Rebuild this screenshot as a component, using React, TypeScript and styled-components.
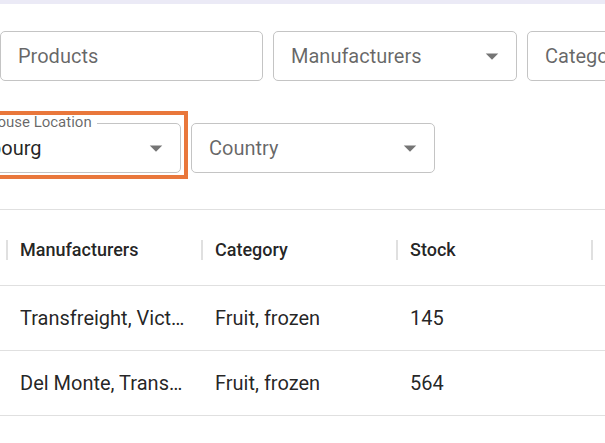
import styled, { createGlobalStyle } from 'styled-components';

const GlobalStyle = createGlobalStyle`
  html, body {
    margin: 0;
    padding: 0;
    background: #fff;
    overflow: hidden;
  }
  body {
    font-family: Roboto, 'Liberation Sans', sans-serif;
  }
`;

const Page = styled.div`
  width: 605px;
  height: 443px;
  overflow: hidden;
`;

const TopStrip = styled.div`
  height: 4px;
  background: #ebeaf6;
`;

const FilterRow = styled.div<{ $top: number; $offset?: number }>`
  display: flex;
  gap: 10px;
  margin-top: ${p => p.$top}px;
  margin-left: ${p => p.$offset ?? 0}px;
`;

const Field = styled.div<{ $width: number }>`
  position: relative;
  flex: 0 0 ${p => p.$width}px;
  box-sizing: border-box;
  height: 50px;
  display: flex;
  align-items: center;
  padding: 0 9px 0 17px;
  border: 1px solid #c4c4c4;
  border-radius: 5px;
  background: #fff;
`;

const FieldText = styled.span<{ $filled?: boolean }>`
  flex: 1;
  font-size: 20px;
  white-space: nowrap;
  overflow: hidden;
  color: ${p => (p.$filled ? 'rgba(0, 0, 0, 0.87)' : 'rgba(0, 0, 0, 0.6)')};
`;

const FloatingLabel = styled.span`
  position: absolute;
  top: -9px;
  left: 12px;
  padding: 0 5px;
  font-size: 15px;
  line-height: 15px;
  color: rgba(0, 0, 0, 0.6);
  background: #fff;
  white-space: nowrap;
`;

const Highlight = styled.span`
  position: absolute;
  top: -13px;
  right: -8px;
  bottom: -7px;
  left: -30px;
  border: 4px solid #e9773b;
  pointer-events: none;
`;

const Arrow = styled.svg`
  flex: 0 0 30px;
  width: 30px;
  height: 30px;
  fill: rgba(0, 0, 0, 0.54);
`;

const DropArrow = () => (
  <Arrow viewBox="0 0 24 24">
    <path d="M7 10l5 5 5-5z" />
  </Arrow>
);

const Grid = styled.div`
  margin-top: 36px;
  margin-left: -187px;
  width: 1200px;
  border-top: 1px solid #e0e0e0;
`;

const HeaderRow = styled.div`
  display: flex;
  box-sizing: border-box;
  height: 76px;
  padding-top: 4px;
  border-bottom: 1px solid #e0e0e0;
`;

const HeaderCell = styled.div`
  flex: 0 0 195px;
  box-sizing: border-box;
  display: flex;
  align-items: center;
  padding-left: 12px;
  font-size: 18px;
  font-weight: 500;
  color: rgba(0, 0, 0, 0.87);
`;

const HeaderLabel = styled.span`
  flex: 1;
  white-space: nowrap;
  overflow: hidden;
`;

const Separator = styled.span`
  flex: 0 0 2px;
  height: 20px;
  background: #e0e0e0;
`;

const Row = styled.div`
  display: flex;
  height: 65px;
  box-sizing: border-box;
  border-bottom: 1px solid #e0e0e0;
`;

const Cell = styled.div`
  flex: 0 0 195px;
  box-sizing: border-box;
  padding: 0 12px;
  line-height: 64px;
  font-size: 20px;
  color: rgba(0, 0, 0, 0.87);
  white-space: nowrap;
  overflow: hidden;
  text-overflow: ellipsis;
`;

const columns = ['Products', 'Manufacturers', 'Category', 'Stock', 'Price'];

const rows = [
  ['Frozen Raspberries', 'Transfreight, Victoria Foods', 'Fruit, frozen', '145', '4.20'],
  ['Frozen Mango Chunks', 'Del Monte, Transworld', 'Fruit, frozen', '564', '3.80'],
];

export default function App() {
  return (
    <Page>
      <GlobalStyle />
      <TopStrip />
      <FilterRow $top={27}>
        <Field $width={263}>
          <FieldText>Products</FieldText>
        </Field>
        <Field $width={244}>
          <FieldText>Manufacturers</FieldText>
          <DropArrow />
        </Field>
        <Field $width={244}>
          <FieldText>Category</FieldText>
          <DropArrow />
        </Field>
      </FilterRow>
      <FilterRow $top={42} $offset={-63}>
        <Field $width={244}>
          <FloatingLabel>Warehouse Location</FloatingLabel>
          <FieldText $filled>Marbourg</FieldText>
          <DropArrow />
          <Highlight />
        </Field>
        <Field $width={244}>
          <FieldText>Country</FieldText>
          <DropArrow />
        </Field>
      </FilterRow>
      <Grid>
        <HeaderRow>
          {columns.map(c => (
            <HeaderCell key={c}>
              <HeaderLabel>{c}</HeaderLabel>
              <Separator />
            </HeaderCell>
          ))}
        </HeaderRow>
        {rows.map((r, i) => (
          <Row key={i}>
            {r.map((v, j) => (
              <Cell key={j}>{v}</Cell>
            ))}
          </Row>
        ))}
      </Grid>
    </Page>
  );
}
